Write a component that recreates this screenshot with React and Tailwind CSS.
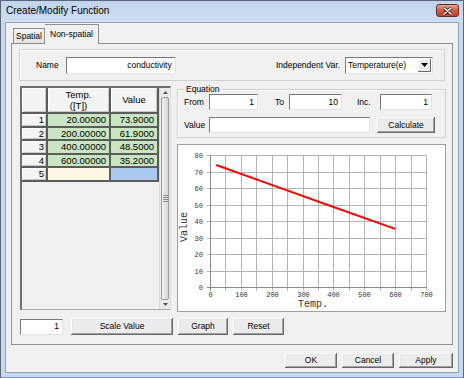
import React from 'react';

const rows = [
  ['1', '20.00000', '73.9000'],
  ['2', '200.00000', '61.9000'],
  ['3', '400.00000', '48.5000'],
  ['4', '600.00000', '35.2000'],
];

const points = [
  [20, 73.9],
  [200, 61.9],
  [400, 48.5],
  [600, 35.2],
];

function Btn({ label, className = '' }) {
  return (
    <button className={`flex items-center justify-center bg-[#ececec] text-[8.5px] leading-none text-black shadow-[inset_-1px_-1px_#696969,inset_1px_1px_#ffffff,inset_-2px_-2px_#a0a0a0,inset_2px_2px_#e6e6e6] ${className}`}>
      {label}
    </button>
  );
}

function Field({ value = '', className = '' }) {
  return (
    <div className={`flex items-center justify-end bg-white border border-t-[#7a7a7a] border-l-[#7a7a7a] border-r-[#e3e3e3] border-b-[#e3e3e3] pr-[3px] text-[8.5px] leading-none ${className}`}>
      {value}
    </div>
  );
}

function Chart() {
  const X0 = 32, X1 = 248, Y0 = 142, Y1 = 10;
  const sx = (v) => Math.round(X0 + (v / 700) * (X1 - X0)) + 0.5;
  const sy = (v) => Math.round(Y0 - (v / 80) * (Y0 - Y1)) + 0.5;
  const fx = (v) => X0 + (v / 700) * (X1 - X0);
  const fy = (v) => Y0 - (v / 80) * (Y0 - Y1);
  return (
    <svg width="267" height="166" className="block">
      {Array.from({ length: 15 }, (_, i) => (
        <line key={'v' + i} x1={sx(i * 50)} x2={sx(i * 50)} y1={Y1 + 0.5} y2={Y0 + 3.5} stroke="#b4b4b4" strokeWidth="1" />
      ))}
      {Array.from({ length: 9 }, (_, i) => (
        <line key={'h' + i} x1={X0 - 3} x2={X1 + 0.5} y1={sy(i * 10)} y2={sy(i * 10)} stroke="#b4b4b4" strokeWidth="1" />
      ))}
      <line x1={X0 + 0.5} x2={X0 + 0.5} y1={Y1} y2={Y0 + 4} stroke="#8a8a8a" />
      <line x1={X0 - 3} x2={X1 + 1} y1={Y0 + 0.5} y2={Y0 + 0.5} stroke="#8a8a8a" />
      {Array.from({ length: 9 }, (_, i) => (
        <text key={'yl' + i} x={25} y={sy(i * 10) + 2.5} textAnchor="end" fontSize="7" fill="#333" fontFamily="'Liberation Mono', monospace">
          {i * 10}
        </text>
      ))}
      {Array.from({ length: 8 }, (_, i) => (
        <text key={'xl' + i} x={sx(i * 100)} y={152} textAnchor="middle" fontSize="7" fill="#333" fontFamily="'Liberation Mono', monospace">
          {i * 100}
        </text>
      ))}
      <text x={135} y={162} textAnchor="middle" fontSize="10" fill="#333" fontFamily="'Liberation Mono', monospace">
        Temp.
      </text>
      <text x={0} y={0} transform="translate(9 82) rotate(-90)" textAnchor="middle" fontSize="10" fill="#333" fontFamily="'Liberation Mono', monospace">
        Value
      </text>
      <polyline
        points={points.map(([x, y]) => `${fx(x)},${fy(y)}`).join(' ')}
        fill="none"
        stroke="#ff0000"
        strokeWidth="2"
      />
    </svg>
  );
}

function DataGrid() {
  return (
    <div className="w-[151px] h-[224px] flex border-l-2 border-t-2 border-r border-b border-l-[#6e6e6e] border-t-[#6e6e6e] border-r-[#dcdcdc] border-b-[#a8a8a8] bg-[#f0f0f0]">
      <div className="self-start grid grid-cols-[24px_61px_46px] grid-rows-[24px_repeat(5,11.5px)] gap-[2px] pr-[2px] pb-[2px] bg-[#5c5c5c] text-[9.5px] leading-none font-['Liberation_Sans',Arial,sans-serif]">
        <div className="bg-[#f4f4f4] shadow-[inset_1px_1px_#ffffff,inset_-1px_-1px_#c8c8c8]" />
        <div className="bg-[#f4f4f4] shadow-[inset_1px_1px_#ffffff,inset_-1px_-1px_#c8c8c8] flex flex-col items-center justify-center leading-[11px]">
          <span>Temp.</span>
          <span>([T])</span>
        </div>
        <div className="bg-[#f4f4f4] shadow-[inset_1px_1px_#ffffff,inset_-1px_-1px_#c8c8c8] flex items-center justify-center">Value</div>
        {rows.map(([n, t, v]) => (
          <React.Fragment key={n}>
            <div className="bg-[#f4f4f4] shadow-[inset_1px_1px_#ffffff,inset_-1px_-1px_#c8c8c8] flex items-center justify-end pr-[2px]">{n}</div>
            <div className="bg-[#c9e5c1] flex items-center justify-end pr-[3px]">{t}</div>
            <div className="bg-[#c9e5c1] flex items-center justify-end pr-[3px]">{v}</div>
          </React.Fragment>
        ))}
        <div className="bg-[#f4f4f4] shadow-[inset_1px_1px_#ffffff,inset_-1px_-1px_#c8c8c8] flex items-center justify-end pr-[2px]">5</div>
        <div className="bg-[#fdf7e6]" />
        <div className="bg-[#a9c9ef]" />
      </div>
      <div className="ml-auto w-[11px] h-full flex flex-col bg-[#e9e9e9] border-l border-[#dadada]">
        <div className="h-[9px] flex items-center justify-center">
          <svg width="5" height="3"><path d="M0 3 L2.5 0 L5 3 Z" fill="#555" /></svg>
        </div>
        <div className="flex-1 mx-[1px] rounded-[2px] border border-[#9b9b9b] bg-gradient-to-r from-[#f2f2f2] to-[#d4d4d4] flex flex-col items-center justify-center gap-[1px]">
          <div className="w-[5px] h-px bg-[#8a8a8a]" />
          <div className="w-[5px] h-px bg-[#8a8a8a]" />
          <div className="w-[5px] h-px bg-[#8a8a8a]" />
          <div className="w-[5px] h-px bg-[#8a8a8a]" />
        </div>
        <div className="h-[9px] flex items-center justify-center">
          <svg width="5" height="3"><path d="M0 0 L5 0 L2.5 3 Z" fill="#555" /></svg>
        </div>
      </div>
    </div>
  );
}

export default function App() {
  return (
    <div className="w-[464px] h-[378px] flex flex-col bg-[#c6d8ee] border border-[#5a6677] border-b-[#3aa8d8] text-black font-['Liberation_Sans',Arial,sans-serif]">
      {/* title bar */}
      <div className="h-[21px] flex items-start justify-between bg-gradient-to-b from-[#c0d4ec] to-[#cfdef0]">
        <span className="mt-[5px] ml-[5px] text-[10px] leading-none">Create/Modify Function</span>
        <div className="mt-[3px] mr-[4px] w-[23px] h-[13px] rounded-[3px] border border-[#6b2c22] bg-gradient-to-b from-[#e8a493] via-[#cf5b45] to-[#c0402c] flex items-center justify-center">
          <svg width="9" height="8" viewBox="0 0 9 8">
            <path d="M1 1 L8 7 M8 1 L1 7" stroke="#4a1c14" strokeWidth="3" strokeLinecap="round" />
            <path d="M1 1 L8 7 M8 1 L1 7" stroke="#ffffff" strokeWidth="1.6" strokeLinecap="round" />
          </svg>
        </div>
      </div>

      {/* body */}
      <div className="flex-1 mx-[4px] mb-[4px] border border-[#8fa3bd] bg-[#f0f0f0] flex flex-col">
        {/* tabs */}
        <div className="h-[19px] mt-[1px] pl-[7px] flex items-end">
          <div className="w-[32px] h-[15px] border border-b-0 border-[#8e8f8f] bg-gradient-to-b from-[#f5f5f5] to-[#e2e2e2] flex items-center justify-center text-[8.5px] leading-none">
            Spatial
          </div>
          <div className="relative z-10 -mb-px w-[54px] h-[20px] border border-b-0 border-[#8e8f8f] border-l-0 bg-[#f0f0f0] flex items-center justify-center text-[8.5px] leading-none">
            Non-spatial
          </div>
        </div>

        {/* panel */}
        <div className="ml-[5px] w-[442px] h-[302px] border border-[#8e8f8f] bg-[#f0f0f0] flex flex-col">
          {/* name group */}
          <div className="ml-[7px] mt-[5px] w-[426px] h-[32px] border border-[#d0d0d0] shadow-[inset_1px_1px_#ffffff] flex items-center text-[8.5px] leading-none">
            <span className="ml-[16px]">Name</span>
            <Field value="conductivity" className="ml-[7px] w-[110px] h-[17px]" />
            <span className="ml-auto">Independent Var.</span>
            <div className="ml-[5px] mr-[11px] w-[88px] h-[17px] bg-white border border-t-[#7a7a7a] border-l-[#7a7a7a] border-r-[#e3e3e3] border-b-[#e3e3e3] flex items-center">
              <span className="ml-[2px] flex-1">Temperature(e)</span>
              <div className="w-[13px] h-[13px] mr-[1px] bg-[#ececec] shadow-[inset_-1px_-1px_#696969,inset_1px_1px_#ffffff] flex items-center justify-center">
                <svg width="7" height="4"><path d="M0 0 L7 0 L3.5 4 Z" fill="#000" /></svg>
              </div>
            </div>
          </div>

          {/* main row */}
          <div className="ml-[8px] mt-[5px] flex gap-[6px]">
            <DataGrid />
            <div className="w-[269px] flex flex-col">
              <div className="relative mt-[3px] border border-[#d0d0d0] shadow-[inset_1px_1px_#ffffff] pt-[4px] pb-[4px] pl-[6px] text-[8.5px] leading-none">
                <span className="absolute -top-[5px] left-[6px] px-[2px] bg-[#f0f0f0]">Equation</span>
                <div className="flex items-center">
                  <span className="w-[25px]">From</span>
                  <Field value="1" className="w-[49px] h-[16px]" />
                  <span className="ml-[17px] w-[14px]">To</span>
                  <Field value="10" className="w-[53px] h-[16px]" />
                  <span className="ml-[15px] w-[23px]">Inc.</span>
                  <Field value="1" className="w-[52px] h-[16px]" />
                </div>
                <div className="mt-[7px] flex items-center">
                  <span className="w-[25px]">Value</span>
                  <Field className="w-[161px] h-[16px]" />
                  <Btn label="Calculate" className="ml-[7px] w-[58px] h-[16px]" />
                </div>
              </div>
              <div className="mt-[6px] h-[168px] border border-[#a0a0a0] bg-white">
                <Chart />
              </div>
            </div>
          </div>

          {/* bottom row */}
          <div className="ml-[8px] mt-[6px] flex items-center">
            <Field value="1" className="w-[43px] h-[16px]" />
            <Btn label="Scale Value" className="ml-[8px] w-[102px] h-[17px]" />
            <Btn label="Graph" className="ml-[5px] w-[50px] h-[17px]" />
            <Btn label="Reset" className="ml-[5px] w-[51px] h-[17px]" />
          </div>
        </div>

        {/* dialog buttons */}
        <div className="mt-[8px] mr-[5px] flex justify-end gap-[5px]">
          <Btn label="OK" className="w-[52px] h-[15px]" />
          <Btn label="Cancel" className="w-[52px] h-[15px]" />
          <Btn label="Apply" className="w-[54px] h-[15px]" />
        </div>
      </div>
    </div>
  );
}
